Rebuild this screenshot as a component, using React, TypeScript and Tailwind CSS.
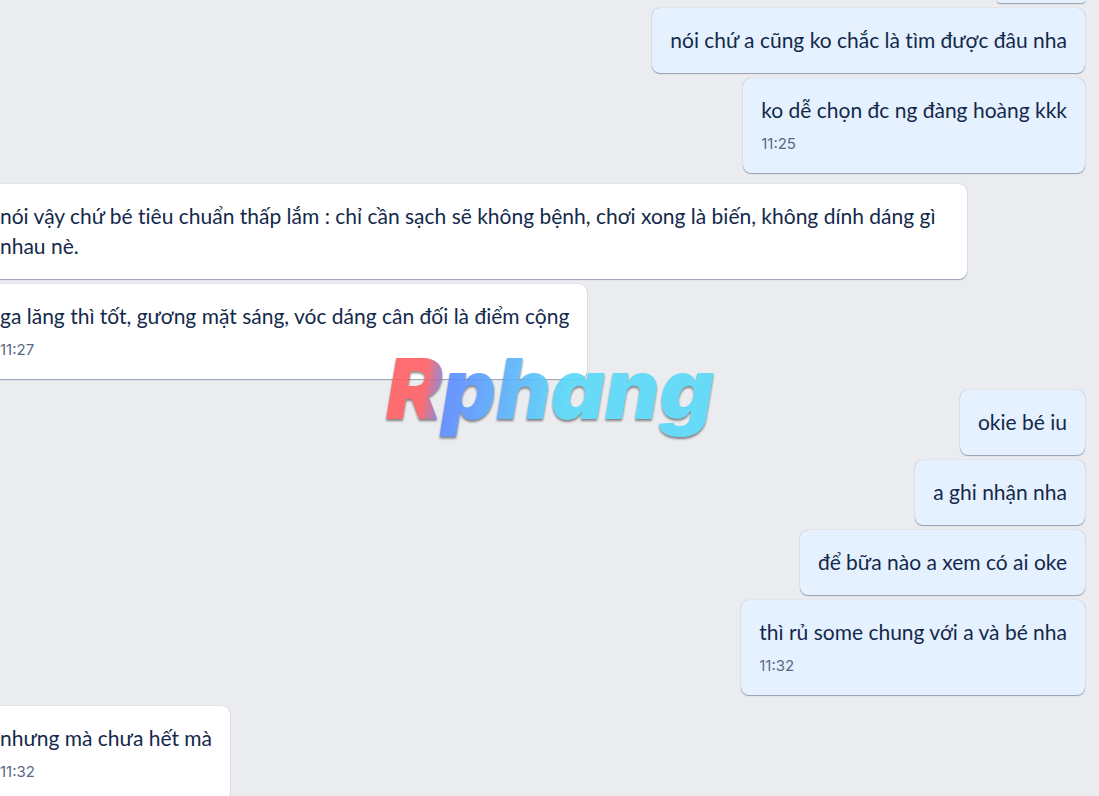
import React from 'react';
import clsx from 'clsx';

interface Message {
  text: string;
  time?: string;
}

interface MessageGroup {
  side: 'in' | 'out';
  messages: Message[];
}

const groups: MessageGroup[] = [
  {
    side: 'out',
    messages: [
      { text: 'nói chứ a cũng ko chắc là tìm được đâu nha' },
      { text: 'ko dễ chọn đc ng đàng hoàng kkk', time: '11:25' },
    ],
  },
  {
    side: 'in',
    messages: [
      { text: 'nói vậy chứ bé tiêu chuẩn thấp lắm : chỉ cần sạch sẽ không bệnh, chơi xong là biến, không dính dáng gì nhau nè.' },
      { text: 'ga lăng thì tốt, gương mặt sáng, vóc dáng cân đối là điểm cộng', time: '11:27' },
    ],
  },
  {
    side: 'out',
    messages: [
      { text: 'okie bé iu' },
      { text: 'a ghi nhận nha' },
      { text: 'để bữa nào a xem có ai oke' },
      { text: 'thì rủ some chung với a và bé nha', time: '11:32' },
    ],
  },
  {
    side: 'in',
    messages: [{ text: 'nhưng mà chưa hết mà', time: '11:32' }],
  },
];

const bubbleShadow = 'shadow-[0_1px_1px_rgba(9,30,66,0.35),0_0_1px_rgba(9,30,66,0.3)]';

function Bubble({ message, side }: { message: Message; side: 'in' | 'out' }) {
  return (
    <div
      className={clsx(
        'max-w-[88%] pt-[17px] pb-[18px] pr-[18px]',
        bubbleShadow,
        side === 'out' ? 'rounded-lg bg-[#e5f1ff] pl-[18px]' : 'rounded-r-lg bg-white'
      )}
    >
      <p className="text-[21px] leading-[30px] text-[#13294b] [font-variant-ligatures:none]">{message.text}</p>
      {message.time && (
        <time className="mt-2 block font-[Inter,sans-serif] text-[15px] leading-[22px] text-[#5a6a85]">{message.time}</time>
      )}
    </div>
  );
}

function Watermark() {
  return (
    <div className="pointer-events-none absolute inset-x-0 top-[330px] flex justify-center">
      <svg width="360" height="130" viewBox="-10 -10 360 130" role="img" aria-label="Rphang">
        <defs>
          <linearGradient id="brand" gradientUnits="userSpaceOnUse" x1="0" y1="40" x2="340" y2="90">
            <stop offset="0.13" stopColor="#ff5f63" />
            <stop offset="0.2" stopColor="#5b8bff" />
            <stop offset="0.55" stopColor="#58d9f8" />
          </linearGradient>
        </defs>
        <text
          x="6"
          y="79"
          fill="url(#brand)"
          opacity="0.9"
          fontFamily="Inter, sans-serif"
          fontSize="84"
          fontWeight="900"
          fontStyle="italic"
          className="drop-shadow-[0_2px_1px_rgba(0,0,0,0.5)]"
        >
          Rphang
        </text>
      </svg>
    </div>
  );
}

export default function App() {
  return (
    <main className="relative h-screen overflow-hidden bg-[#ebecf0] font-[Lato,'Noto_Sans',sans-serif]">
      <div className="flex flex-col gap-[11px]">
        {groups.map((group, i) => (
          <section
            key={i}
            className={clsx('flex flex-col gap-[5px]', group.side === 'out' ? 'items-end pr-[14px]' : 'items-start')}
          >
            {/* tail of the message scrolled past the top */}
            {i === 0 && <div className={clsx('h-[3px] w-[88px] rounded-b-lg bg-[#e5f1ff]', bubbleShadow)} />}
            {group.messages.map((message) => (
              <Bubble key={message.text} message={message} side={group.side} />
            ))}
          </section>
        ))}
      </div>
      <Watermark />
    </main>
  );
}
